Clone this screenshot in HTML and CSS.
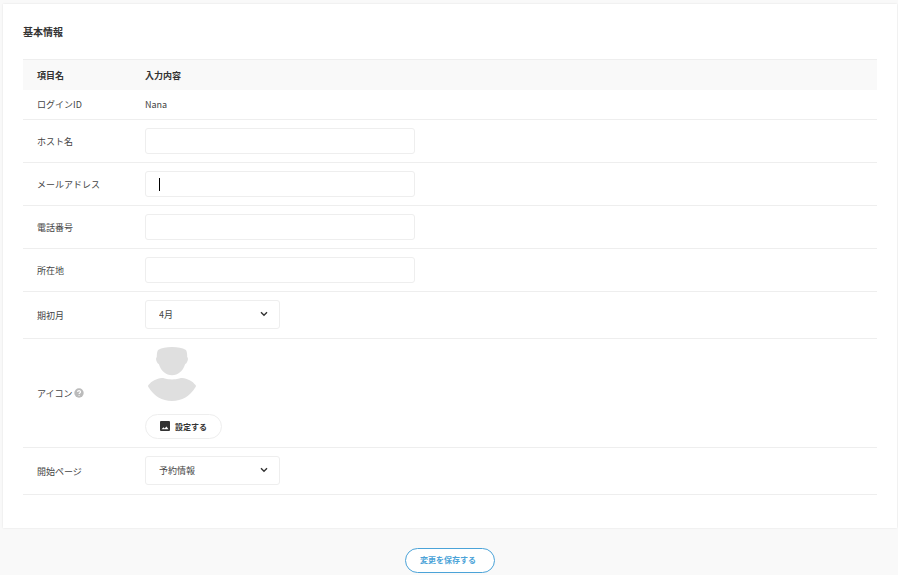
FILE: index.html
```html
<!doctype html>
<html lang="ja">
  <head>
    <meta charset="utf-8">
    <title>基本情報</title>
    <link rel="stylesheet" href="styles.css">
  </head>
  <body>
    <form>
      <div class="card">
        <h1>基本情報</h1>
        <table class="settings">
          <thead>
            <tr><th class="name">項目名</th><th>入力内容</th></tr>
          </thead>
          <tbody>
            <tr class="plain">
              <td>ログインID</td>
              <td>Nana</td>
            </tr>
            <tr>
              <td><label for="host">ホスト名</label></td>
              <td><input class="text" type="text" id="host"></td>
            </tr>
            <tr>
              <td><label for="mail">メールアドレス</label></td>
              <td><div class="field"><input class="text" type="text" id="mail"><span class="caret"></span></div></td>
            </tr>
            <tr>
              <td><label for="tel">電話番号</label></td>
              <td><input class="text" type="text" id="tel"></td>
            </tr>
            <tr>
              <td><label for="address">所在地</label></td>
              <td><input class="text" type="text" id="address"></td>
            </tr>
            <tr>
              <td><label for="month">期初月</label></td>
              <td>
                <div class="select">
                  <select id="month"><option>4月</option></select>
                  <svg class="arrow" viewBox="0 0 8 6"><path d="M1 1.2l3 3 3-3"/></svg>
                </div>
              </td>
            </tr>
            <tr>
              <td>
                <div class="label">アイコン
                  <svg class="help" viewBox="0 0 10 10"><circle cx="5" cy="5" r="4.7"/><path d="M3.6 4.1c0-1.9 2.9-1.8 2.9-.1 0 1-1.4 1.1-1.4 2.1M5.1 6.9v.9"/></svg>
                </div>
              </td>
              <td>
                <svg class="avatar" viewBox="0 0 50 56"><path d="M11 4C15 1.7 19 1 25 1s10 .7 14 3c1 2 1.300 4.500 1.200 7C41.500 12 41 15 39.500 17c-.5.7-1.200.9-1.500 1.500C36 25 31 29.200 25 29.200S14 25 12 18.500c-.3-.6-1-.8-1.500-1.500C9 15 8.500 12 9.800 11 9.700 8.500 10 6 11 4z"/><path d="M15 32c3 0 4 1.400 10 1.400S32 32 35 32c5.500.5 10.500 3.200 13.500 7 .6.800.6 1.200.1 2C43 50 35 55 25 55S7 50 1.400 41c-.5-.8-.5-1.200.1-2C4.500 35.200 9.500 32.500 15 32z"/></svg>
                <button type="button" class="pick">
                  <svg viewBox="0 0 10 10"><path fill-rule="evenodd" d="M1 0h8a1 1 0 0 1 1 1v8a1 1 0 0 1-1 1H1a1 1 0 0 1-1-1V1a1 1 0 0 1 1-1zM1.5 8.3h7L6.4 5.5 4.7 7.6 3.5 6.2z"/></svg>設定する</button>
              </td>
            </tr>
            <tr>
              <td><label for="start">開始ページ</label></td>
              <td>
                <div class="select">
                  <select id="start"><option>予約情報</option></select>
                  <svg class="arrow" viewBox="0 0 8 6"><path d="M1 1.2l3 3 3-3"/></svg>
                </div>
              </td>
            </tr>
          </tbody>
        </table>
      </div>
      <div class="footer">
        <button type="submit" class="save">変更を保存する</button>
      </div>
    </form>
  </body>
</html>
```

FILE: styles.css
```css
* {
  box-sizing: border-box;
}

body {
  margin: 0;
  background: #f9f9f9;
  color: #444;
  font: 9px/13px "Noto Sans CJK JP", "Noto Sans", sans-serif;
}

input, select, button {
  font: inherit;
  color: inherit;
}

.card {
  margin: 4px 1px 0 3px;
  padding: 20px 20px 33px;
  background: #fff;
  box-shadow: 0 0 2px rgba(0, 0, 0, 0.1);
}

h1 {
  margin: 0 0 19px;
  color: #333;
  font-size: 10px;
  line-height: 16px;
}

.settings {
  width: 100%;
  border-collapse: separate;
  border-spacing: 0;
}

.settings th {
  height: 31px;
  padding: 1px 14px 0;
  border-top: 1px solid #eee;
  background: #f9f9f9;
  color: #333;
  text-align: left;
}

.settings .name {
  width: 108px;
}

.settings td {
  padding: 8px 14px;
  border-bottom: 1px solid #eee;
}

.settings .plain td {
  height: 30px;
}

.text {
  display: block;
  width: 270px;
  height: 26px;
  padding: 0 13px;
  border: 1px solid #eee;
  border-radius: 3px;
  background: #fff;
}

.field, .select {
  position: relative;
}

.caret {
  position: absolute;
  top: 7px;
  left: 14px;
  width: 1px;
  height: 13px;
  background: #000;
}

.select {
  width: 135px;
  margin-bottom: 1px;
}

.select select {
  display: block;
  appearance: none;
  width: 100%;
  height: 29px;
  padding: 0 13px;
  border: 1px solid #eee;
  border-radius: 3px;
  background: #fff;
}

.arrow {
  position: absolute;
  top: 11px;
  right: 12px;
  width: 8px;
  height: 6px;
  fill: none;
  stroke: #333;
  stroke-width: 1.4;
  pointer-events: none;
}

.label {
  display: flex;
  align-items: center;
  gap: 1px;
}

.help {
  width: 10px;
  height: 10px;
  fill: #bbb;
}

.help path {
  fill: none;
  stroke: #fff;
  stroke-width: 1.2;
}

.avatar {
  display: block;
  width: 50px;
  height: 56px;
  margin: -1px 0 12px 2px;
  fill: #dfdfdf;
}

.pick {
  display: flex;
  align-items: center;
  gap: 5px;
  height: 25px;
  padding: 0 14px 1px;
  border: 1px solid #eee;
  border-radius: 13px;
  background: #fff;
  color: #333;
  font-size: 8px;
  font-weight: bold;
}

.pick svg {
  width: 10px;
  height: 10px;
  fill: #333;
}

.footer {
  padding: 20px 0 0 2px;
  text-align: center;
}

.save {
  height: 25px;
  padding: 0 18px 2px 14px;
  border: 1px solid #4ba3d8;
  border-radius: 13px;
  background: #fff;
  color: #4ba3d8;
  font-size: 8px;
  font-weight: bold;
}
```
